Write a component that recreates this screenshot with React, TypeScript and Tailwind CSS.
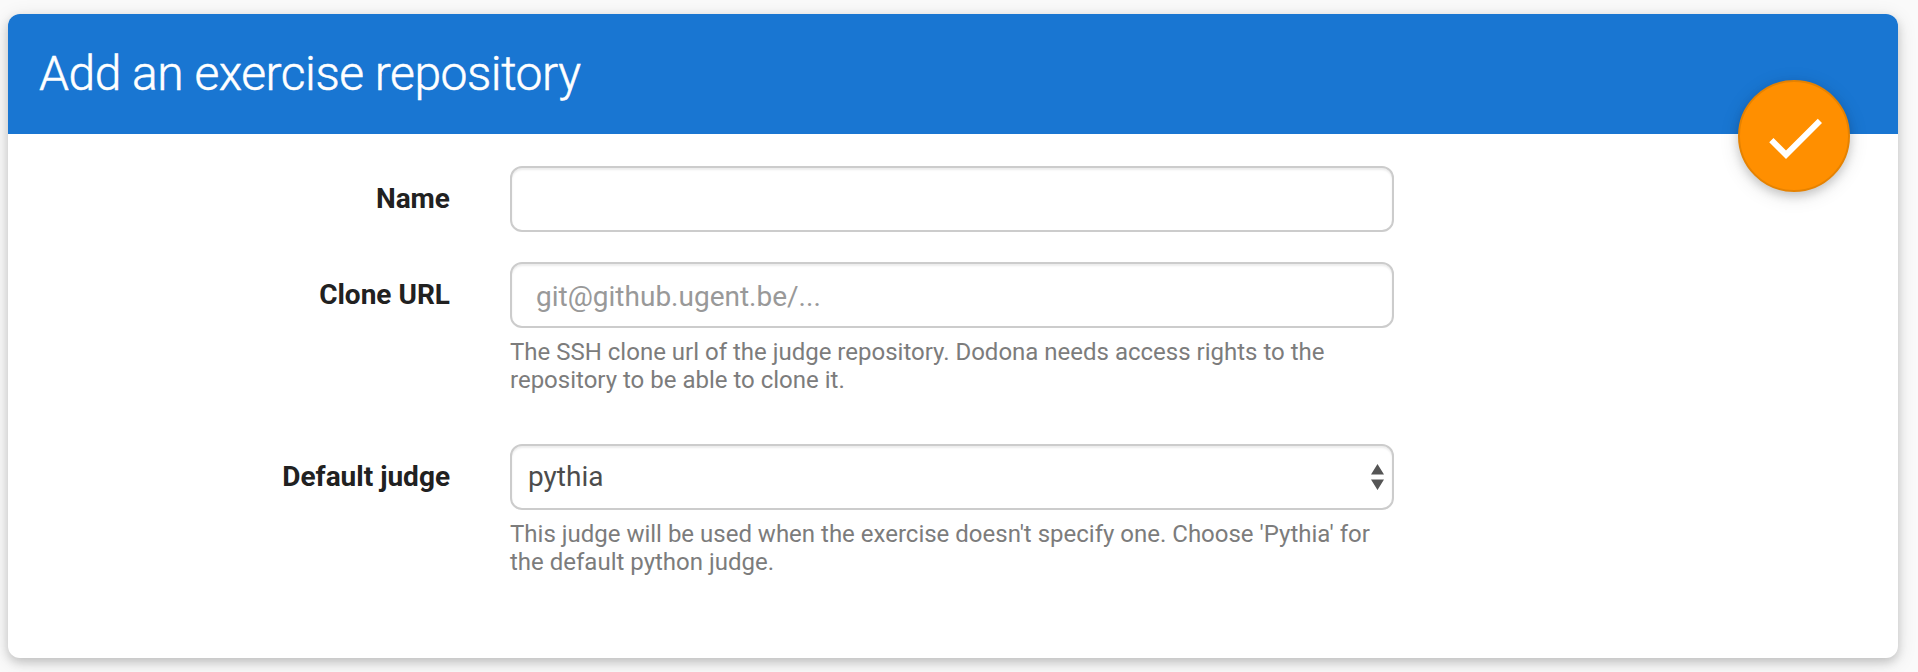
import type { ReactNode } from "react";

const control =
  "h-[66px] w-full rounded-[12px] border-2 border-[#cccccc] bg-white shadow-[inset_0_2px_2px_rgba(0,0,0,0.075)] outline-none text-[28px] leading-[40px]";

function Field({ id, label, help, children }: { id: string; label: string; help?: string; children: ReactNode }) {
  return (
    <div className="flex">
      <label htmlFor={id} className="mr-[60px] w-[442px] shrink-0 pt-[13px] text-right text-[28px] leading-[40px] font-bold text-[#212121]">
        {label}
      </label>
      <div className="w-[884px]">
        {children}
        {help && <p className="mt-[10px] w-[884px] text-[24px] leading-[28px] text-[#7c7c7c]">{help}</p>}
      </div>
    </div>
  );
}

export default function App() {
  return (
    <main className="h-[672px] overflow-hidden bg-[#fafafa] pt-[14px] pl-2 font-['Roboto',sans-serif]">
      <section className="relative h-[644px] w-[1890px] rounded-[12px] bg-white shadow-[0_4px_10px_0_rgba(0,0,0,0.16),0_4px_20px_0_rgba(0,0,0,0.12)]">
        <header className="flex h-[120px] items-center rounded-t-[12px] bg-[#1976d2] pl-[31px]">
          <h1 className="text-[48px] leading-[56px] font-light tracking-[-0.01em] text-white [-webkit-text-stroke:0.5px_white]">
            Add an exercise repository
          </h1>
        </header>
        <button
          type="button"
          aria-label="Save"
          className="absolute top-[66px] right-[48px] flex size-[112px] items-center justify-center rounded-full border-2 border-[#e68200] bg-[#ff8f00] pt-[3px] pl-[2px] shadow-[0_4px_10px_0_rgba(0,0,0,0.16),0_4px_20px_0_rgba(0,0,0,0.12)]"
        >
          <svg viewBox="0 0 24 24" className="size-[72px] shrink-0 fill-white">
            <path d="M9 16.17 4.83 12l-1.42 1.41L9 19 21 7l-1.41-1.41z" />
          </svg>
        </button>
        <form className="flex flex-col pt-8">
          <Field id="name" label="Name">
            <input id="name" className={`${control} block px-6 text-[#555555]`} />
          </Field>
          <div className="mt-[30px]">
            <Field
              id="url"
              label="Clone URL"
              help="The SSH clone url of the judge repository. Dodona needs access rights to the repository to be able to clone it."
            >
              <input
                id="url"
                placeholder="git@github.ugent.be/..."
                className={`${control} block px-6 pt-[2px] text-[#555555] placeholder:text-[#999999] placeholder:opacity-100`}
              />
            </Field>
          </div>
          <div className="mt-[50px]">
            <Field
              id="judge"
              label="Default judge"
              help="This judge will be used when the exercise doesn't specify one. Choose 'Pythia' for the default python judge."
            >
              <div
                id="judge"
                role="combobox"
                aria-expanded="false"
                aria-controls="judge"
                className={`${control} flex items-center justify-between pr-[8px] pl-4 text-[#4c4c4c]`}
              >
                <span>pythia</span>
                <svg viewBox="0 0 13 26" className="h-[26px] w-[13px] fill-[#555555]">
                  <path d="M6.5 0 13 10.5H0zM0 15.5h13L6.500 26z" />
                </svg>
              </div>
            </Field>
          </div>
        </form>
      </section>
    </main>
  );
}
